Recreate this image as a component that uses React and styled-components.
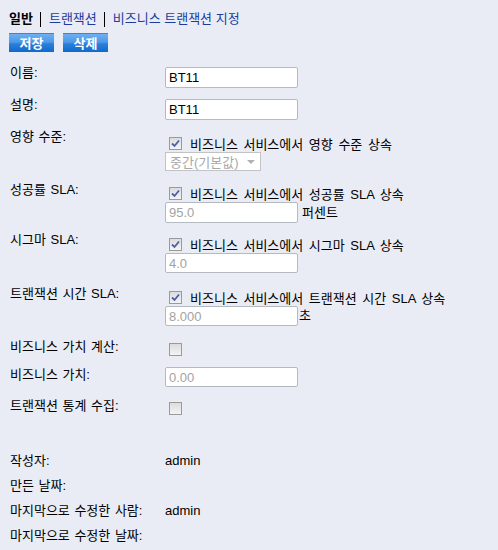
import React from 'react';
import styled, { createGlobalStyle } from 'styled-components';

const GlobalStyle = createGlobalStyle`
  html, body {
    margin: 0;
    padding: 0;
    background: #e9ecf5;
  }
  body {
    font-family: "Liberation Sans", "Noto Sans CJK KR", sans-serif;
    font-size: 13px;
    color: #000;
  }
`;

const Page = styled.div`
  padding: 10px 9px 0 9px;
  min-height: 550px;
  box-sizing: border-box;
`;

const Tabs = styled.div`
  display: flex;
  align-items: center;
  height: 18px;
  line-height: 18px;
`;

const Tab = styled.a`
  color: ${props => (props.$active ? '#000' : '#1c3c9c')};
  font-weight: ${props => (props.$active ? 700 : 400)};
  text-decoration: none;
  cursor: pointer;
`;

const Divider = styled.span`
  width: 1px;
  height: 15px;
  background: #000;
  margin: 0 8px 0 7px;
`;

const Toolbar = styled.div`
  display: flex;
  gap: 9px;
  margin-top: 5px;
`;

const Button = styled.button`
  width: 45px;
  height: 19px;
  padding: 0 0 2px;
  border: none;
  border-top: 1px solid #3b84d6;
  background: linear-gradient(#6eb0f2 0%, #4f98e6 45%, #2a7fdc 55%, #0e6acc 100%);
  color: #fff;
  font-family: "Noto Sans CJK KR", sans-serif;
  font-weight: 700;
  font-size: 13px;
  line-height: 15px;
  cursor: pointer;
`;

const Form = styled.div`
  margin-top: 13px;
  padding-left: 1px;
`;

const Row = styled.div`
  display: grid;
  grid-template-columns: 155px 1fr;
  height: ${props => props.$h}px;
`;

const Label = styled.div`
  line-height: 16px;
  white-space: nowrap;
  word-spacing: 1px;
`;

const Value = styled.div`
  display: flex;
  flex-direction: column;
  align-items: flex-start;
  padding-top: ${props => props.$pt || 0}px;
`;

const Line = styled.div`
  display: flex;
  align-items: center;
  height: 18px;
  white-space: nowrap;
`;

const Input = styled.input`
  box-sizing: border-box;
  width: 133px;
  height: ${props => props.$h || 21}px;
  margin: 0;
  padding: 0 3px;
  border: 1px solid #b5b9c2;
  border-radius: 2px;
  background: #fff;
  font-family: "Liberation Sans", "Noto Sans CJK KR", sans-serif;
  font-size: 13px;
  color: ${props => (props.disabled ? '#a3a3a3' : '#000')};
  outline: none;
`;

const Unit = styled.span`
  margin-left: ${props => props.$gap}px;
  line-height: 20px;
`;

const InputRow = styled.div`
  display: flex;
  align-items: center;
`;

const Box = styled.span`
  box-sizing: border-box;
  width: 13px;
  height: 13px;
  margin-left: 4px;
  border: 1px solid #9a9a9a;
  background: linear-gradient(#dcdcdc, #f4f4f4);
  display: inline-flex;
  align-items: center;
  justify-content: center;
  flex-shrink: 0;
`;

const CheckText = styled.span`
  margin-left: 8px;
  word-spacing: 2px;
`;

const Select = styled.div`
  box-sizing: border-box;
  width: 96px;
  height: 19px;
  border: 1px solid #c3c3c3;
  background: #fff;
  display: flex;
  align-items: center;
  justify-content: space-between;
  padding: 0 5px 0 4px;
  color: #a8a8a8;
  font-size: 13px;
`;

const Arrow = styled.span`
  width: 0;
  height: 0;
  border-left: 4px solid transparent;
  border-right: 4px solid transparent;
  border-top: 4px solid #b0b0b0;
`;

const Meta = styled.div`
  margin-top: 35px;
  padding-left: 1px;
`;

const MetaRow = styled.div`
  display: grid;
  grid-template-columns: 155px 1fr;
  height: 25px;
  line-height: 16px;
`;

const Check = ({ checked, children }) => (
  <Line>
    <Box>
      {checked && (
        <svg width="9" height="9" viewBox="0 0 9 9">
          <path d="M1 4.5 L3.5 7 L8 1.5" fill="none" stroke="#4b5fa8" strokeWidth="1.8" />
        </svg>
      )}
    </Box>
    {children && <CheckText>{children}</CheckText>}
  </Line>
);

const App = () => (
  <Page>
    <GlobalStyle />
    <Tabs>
      <Tab $active>일반</Tab>
      <Divider />
      <Tab>트랜잭션</Tab>
      <Divider />
      <Tab>비즈니스 트랜잭션 지정</Tab>
    </Tabs>
    <Toolbar>
      <Button>저장</Button>
      <Button>삭제</Button>
    </Toolbar>

    <Form>
      <Row $h={32}>
        <Label>이름:</Label>
        <Value $pt={2}>
          <Input defaultValue="BT11" />
        </Value>
      </Row>
      <Row $h={32}>
        <Label>설명:</Label>
        <Value $pt={2}>
          <Input defaultValue="BT11" />
        </Value>
      </Row>
      <Row $h={53}>
        <Label>영향 수준:</Label>
        <Value $pt={5}>
          <Check checked>비즈니스 서비스에서 영향 수준 상속</Check>
          <Select>
            <span>중간(기본값)</span>
            <Arrow />
          </Select>
        </Value>
      </Row>
      <Row $h={50}>
        <Label>성공률 SLA:</Label>
        <Value $pt={2}>
          <Check checked>비즈니스 서비스에서 성공률 SLA 상속</Check>
          <InputRow>
            <Input disabled defaultValue="95.0" />
            <Unit $gap={4}>퍼센트</Unit>
          </InputRow>
        </Value>
      </Row>
      <Row $h={54}>
        <Label>시그마 SLA:</Label>
        <Value $pt={3}>
          <Check checked>비즈니스 서비스에서 시그마 SLA 상속</Check>
          <Input disabled defaultValue="4.0" $h={20} />
        </Value>
      </Row>
      <Row $h={53}>
        <Label>트랜잭션 시간 SLA:</Label>
        <Value $pt={2}>
          <Check checked>비즈니스 서비스에서 트랜잭션 시간 SLA 상속</Check>
          <InputRow>
            <Input disabled defaultValue="8.000" $h={20} />
            <Unit $gap={1}>초</Unit>
          </InputRow>
        </Value>
      </Row>
      <Row $h={28}>
        <Label>비즈니스 가치 계산:</Label>
        <Value $pt={1}>
          <Check />
        </Value>
      </Row>
      <Row $h={31}>
        <Label>비즈니스 가치:</Label>
        <Value>
          <Input disabled defaultValue="0.00" $h={20} />
        </Value>
      </Row>
      <Row $h={20}>
        <Label>트랜잭션 통계 수집:</Label>
        <Value $pt={1}>
          <Check />
        </Value>
      </Row>
    </Form>

    <Meta>
      <MetaRow>
        <Label>작성자:</Label>
        <span>admin</span>
      </MetaRow>
      <MetaRow>
        <Label>만든 날짜:</Label>
        <span />
      </MetaRow>
      <MetaRow>
        <Label>마지막으로 수정한 사람:</Label>
        <span>admin</span>
      </MetaRow>
      <MetaRow>
        <Label>마지막으로 수정한 날짜:</Label>
        <span />
      </MetaRow>
    </Meta>
  </Page>
);

export default App;
